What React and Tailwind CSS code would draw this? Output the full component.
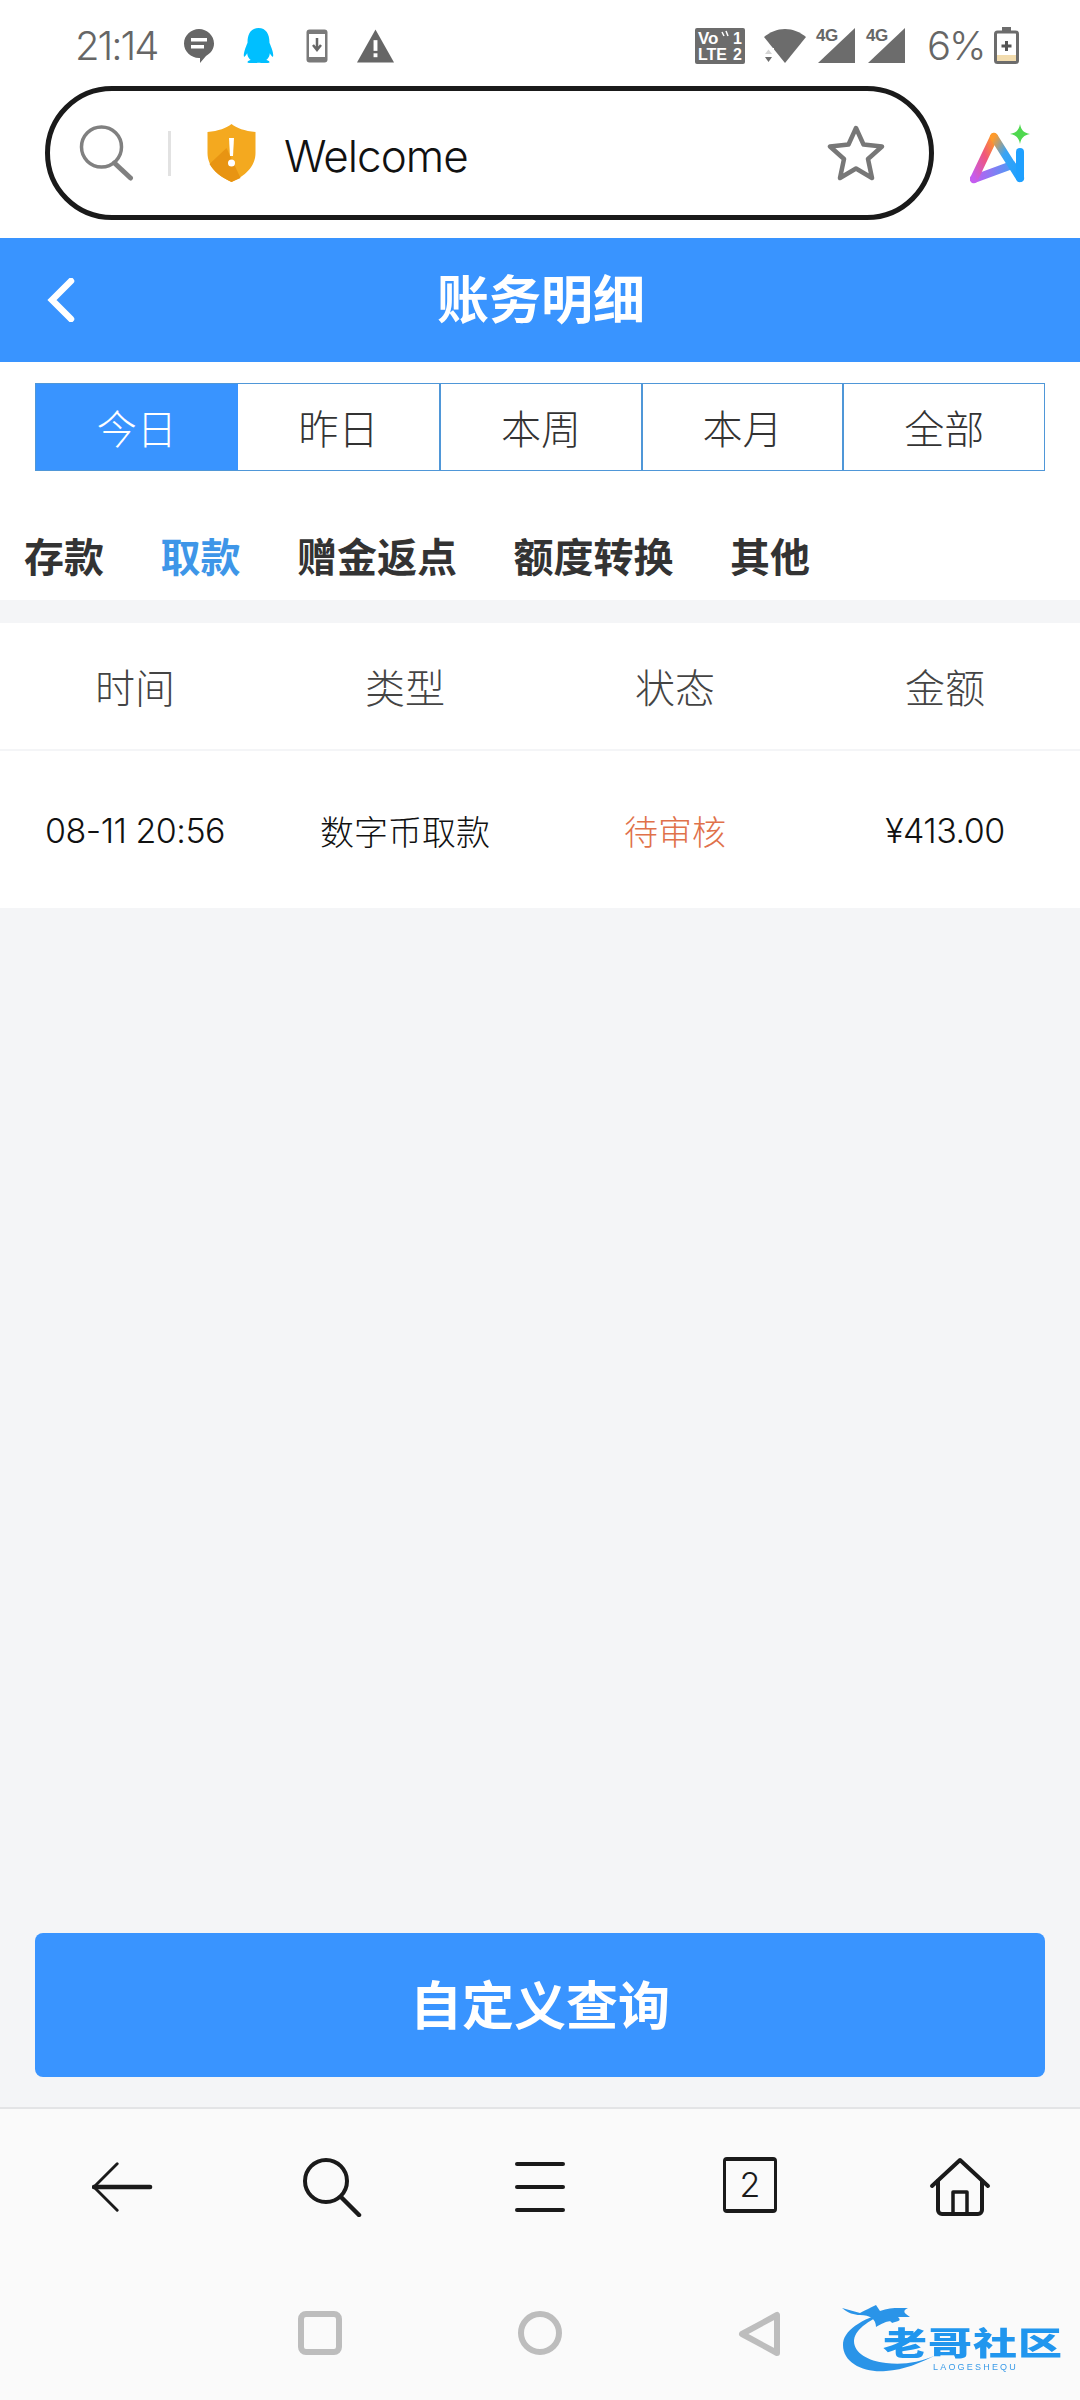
// App.jsx - account details page inside a mobile browser shell
import React from 'react';
import { FaQq } from 'react-icons/fa';

const latin = "font-['Inter','Noto_Sans_CJK_SC',sans-serif]";

const periods = ['今日', '昨日', '本周', '本月', '全部'];
const categories = ['存款', '取款', '赠金返点', '额度转换', '其他'];
const columns = ['时间', '类型', '状态', '金额'];

const StatusBar = () => (
  <div className="h-[86px] flex items-start pt-[27px] pl-[75px] pr-[61px] justify-between bg-white text-[#666666]">
    <div className="flex items-center h-[37px]">
      <span className={`${latin} font-light text-[40px] leading-none tracking-[-2px] w-[109px]`}>21:14</span>
      <svg width="30" height="36" viewBox="0 0 30 36">
        <path fill="#666666" d="M15 1C7 1 0 7.500 0 15.500 0 23.500 7 30 15 30l1 0 0 5 6-7c5-3 8-7 8-12.500C30 7.500 23 1 15 1z" />
        <rect x="7" y="10" width="16" height="3.500" fill="#fff" />
        <rect x="7" y="17" width="13" height="3.500" fill="#fff" />
      </svg>
      <FaQq className="ml-[29px] w-[31px] h-[35px] text-[#00bfff]" />
      <svg width="22" height="34" viewBox="0 0 22 34" className="ml-[32px]">
        <rect x="0.500" y="0.500" width="21" height="33" rx="3" fill="#7a7a7a" />
        <rect x="3" y="5" width="16" height="23" fill="#fff" />
        <path d="M11 9v11M7 16l4 5 4-5" stroke="#666" strokeWidth="2.500" fill="none" />
      </svg>
      <svg width="37" height="34" viewBox="0 0 38 34" className="ml-[29px]">
        <path fill="#666" d="M19 0 38 34H0z" />
        <rect x="17" y="11" width="4" height="11" fill="#fff" />
        <rect x="17" y="24.500" width="4" height="4" fill="#fff" />
      </svg>
    </div>
    <div className="flex items-center h-[37px]">
      <svg width="50" height="36" viewBox="0 0 50 36">
        <rect width="50" height="36" rx="2" fill="#6c6c6c" />
        <text x="3" y="16" fontFamily="Liberation Sans" fontWeight="700" fontSize="17" fill="#fff">Vo</text>
        <text x="38" y="16" fontFamily="Liberation Sans" fontWeight="700" fontSize="16" fill="#fff">1</text>
        <path d="M27 4l2 4M31 3l2 5" stroke="#fff" strokeWidth="1.500" />
        <text x="3" y="32" fontFamily="Liberation Sans" fontWeight="700" fontSize="16" fill="#fff">LTE</text>
        <text x="38" y="32" fontFamily="Liberation Sans" fontWeight="700" fontSize="16" fill="#fff">2</text>
      </svg>
      <svg width="42" height="36" viewBox="0 0 42 36" className="ml-[19px]">
        <path fill="#6c6c6c" d="M0 9C6 4 13 1 21 1s15 3 21 8L21 35z" />
        <path fill="#fff" d="M0 20h10v16H0z" />
        <path fill="#d4d4d4" d="M1 26h7l-3.500-4.500z" />
        <path fill="#6c6c6c" d="M1 29h7l-3.500 5z" />
      </svg>
      {[0, 1].map((i) => (
        <div key={i} className="relative w-[39px] h-[37px] ml-[11px]">
          <svg width="39" height="37" viewBox="0 0 39 37">
            <path fill="#6c6c6c" d="M38 1v35H1z" />
          </svg>
          <span className="absolute left-[-1px] top-[0px] text-[17px] leading-none font-bold tracking-[-0.500px] font-['Liberation_Sans',sans-serif]">4G</span>
        </div>
      ))}
      <span className={`${latin} font-light text-[40px] leading-none tracking-[-2px] ml-[21px] w-[67px]`}>6%</span>
      <svg width="25" height="37" viewBox="0 0 25 37">
        <rect x="8" y="0" width="9" height="4" fill="#6c6c6c" />
        <rect x="1.500" y="5" width="22" height="30.500" rx="2" fill="#fff" stroke="#6c6c6c" strokeWidth="3" />
        <rect x="3" y="28" width="19" height="6" fill="#f2dcae" />
        <path d="M12.500 14v10M7.500 19h10" stroke="#555" strokeWidth="3" />
      </svg>
    </div>
  </div>
);

const UrlBar = () => (
  <div className="h-[152px] flex items-start bg-white pl-[45px]">
    <div className="w-[889px] h-[134px] rounded-[67px] border-[5px] border-[#1a1a1a] flex items-center pl-[29px] pr-[44px]">
      <svg width="55" height="56" viewBox="0 0 54 56" fill="none" stroke="#808080" className="shrink-0">
        <circle cx="22" cy="22" r="20" strokeWidth="3.500" />
        <path d="M35 38l16 15" strokeWidth="5" strokeLinecap="round" />
      </svg>
      <div className="w-[3px] h-[45px] bg-[#e2e2e2] ml-[34px]" />
      <svg width="51" height="58" viewBox="0 0 50 58" className="ml-[35px] shrink-0">
        <path fill="#f4a91f" d="M25 0c5 4 13 7 24 8v21C49 43 38 52 25 58 12 52 1 43 1 29V8C12 7 20 4 25 0z" />
        <path fill="#e89412" d="M3 40 20 24l14 30-9 4C14 53 7 47 3 40z" />
        <path fill="#fff" d="M22.500 14h5l-1 18h-3z" />
        <circle cx="25" cy="39" r="3.500" fill="#fff" />
      </svg>
      <span className={`${latin} font-light text-[44px] leading-none text-[#111111] ml-[27px] pt-[5px] tracking-[-1px]`}>Welcome</span>
      <svg width="58" height="58" viewBox="0 0 58 58" fill="none" className="ml-auto shrink-0">
        <path stroke="#777777" strokeWidth="4.500" strokeLinejoin="round" d="M29 4l7.500 16.500 18.500 2-14 12.500 4 19L29 44.500 13 54l4-19L3 22.500l18.500-2z" />
      </svg>
    </div>
    <svg width="62" height="62" viewBox="0 0 62 62" fill="none" className="ml-[36px] mt-[38px]">
      <defs>
        <linearGradient id="legLeft" x1="0" y1="1" x2="1" y2="0">
          <stop offset="0" stopColor="#c45cf0" />
          <stop offset="0.550" stopColor="#f0557c" />
          <stop offset="1" stopColor="#ffa01e" />
        </linearGradient>
        <linearGradient id="legRight" x1="0" y1="0" x2="1" y2="1">
          <stop offset="0" stopColor="#ff9a2a" />
          <stop offset="0.400" stopColor="#3aa4f4" />
          <stop offset="1" stopColor="#1fa0ff" />
        </linearGradient>
        <linearGradient id="crossBar" x1="0" y1="0" x2="1" y2="0">
          <stop offset="0" stopColor="#c25cf2" />
          <stop offset="1" stopColor="#4a9cf5" />
        </linearGradient>
      </defs>
      <path d="M4 55 42 41" stroke="url(#crossBar)" strokeWidth="8" strokeLinecap="round" />
      <path d="M4 55 24 13" stroke="url(#legLeft)" strokeWidth="8" strokeLinecap="round" />
      <path d="M24 13 50 54" stroke="url(#legRight)" strokeWidth="8" strokeLinecap="round" />
      <path d="M50 28V54" stroke="#1fa0ff" strokeWidth="8" strokeLinecap="round" />
      <path fill="#4fd84f" d="M50 0c1 6 4 9 10 10-6 1-9 4-10 10-1-6-4-9-10-10 6-1 9-4 10-10z" />
    </svg>
  </div>
);

const PageHeader = () => (
  <div className="relative h-[124px] pb-[6px] pl-[2px] bg-[#3994ff] flex items-center justify-center">
    <svg width="28" height="44" viewBox="0 0 28 44" fill="none" className="absolute left-[47px] top-[40px]">
      <path d="M24 3 5 22l19 19" stroke="#fff" strokeWidth="6.500" strokeLinecap="round" />
    </svg>
    <span className="text-[52px] leading-none font-bold text-white font-['Noto_Sans_CJK_SC',sans-serif]">账务明细</span>
  </div>
);

const PeriodTabs = () => (
  <div className="mt-[21px] mx-[35px] h-[88px] flex border border-[#4f97d8]">
    {periods.map((label, i) => (
      <div
        key={label}
        className={`w-[201.6px] flex items-center justify-center text-[40px] font-light ${
          i === 0 ? 'bg-[#3994ff] text-white' : 'text-[#333333]'
        } ${i > 1 ? 'border-l-2 border-[#4f97d8]' : ''}`}
      >
        {label}
      </div>
    ))}
  </div>
);

const CategoryTabs = () => (
  <div className="h-[129px] pl-[24px] pt-[38px] flex items-center gap-[56.5px]">
    {categories.map((label, i) => (
      <span
        key={label}
        className={`text-[40px] leading-none font-bold ${i === 1 ? 'text-[#3e96e8]' : 'text-[#333333]'}`}
      >
        {label}
      </span>
    ))}
  </div>
);

const RecordTable = () => (
  <div className="bg-white">
    <div className="h-[128px] grid grid-cols-4 items-center text-center text-[40px] font-light text-[#444444] border-b-2 border-[#f4f5f7]">
      {columns.map((c) => (
        <span key={c}>{c}</span>
      ))}
    </div>
    <div className="h-[157px] pt-[2px] grid grid-cols-4 items-center text-center text-[34px] font-light text-[#111111]">
      <span className={`${latin} tracking-[-0.500px]`}>08-11 20:56</span>
      <span>数字币取款</span>
      <span className="text-[#e0714a]">待审核</span>
      <span className={`${latin} tracking-[-0.500px]`}>¥413.00</span>
    </div>
  </div>
);

const BrowserBar = () => (
  <div className="h-[160px] grid grid-cols-5 px-[15px] pt-[48px] items-start justify-items-center">
    <svg width="62" height="52" viewBox="0 0 64 52" fill="none" stroke="#1a1a1a" strokeLinecap="round" className="mt-[4px] ml-[6px]">
      <path d="M2 26h58" strokeWidth="4.500" />
      <path d="M26 2 2 26l24 24" strokeWidth="3" strokeLinejoin="round" />
    </svg>
    <svg width="60" height="60" viewBox="0 0 60 60" fill="none" stroke="#1a1a1a" strokeLinecap="round" className="ml-[3px]">
      <circle cx="24" cy="24" r="21" strokeWidth="4" />
      <path d="M39 40l18 18" strokeWidth="4.500" />
    </svg>
    <div className="w-[50px] h-[50px] mt-[5px] flex flex-col justify-between">
      <div className="h-[4px] bg-[#1a1a1a] rounded-full" />
      <div className="h-[4px] bg-[#1a1a1a] rounded-full" />
      <div className="h-[4px] bg-[#1a1a1a] rounded-full" />
    </div>
    <div className={`${latin} font-light w-[54px] h-[56px] border-x-[3px] border-y-[4px] border-[#1a1a1a] rounded-[4px] flex items-center justify-center text-[34px] leading-none text-[#1a1a1a]`}>
      2
    </div>
    <svg width="62" height="60" viewBox="0 0 62 60" fill="none" stroke="#1a1a1a" strokeWidth="4" strokeLinejoin="round" strokeLinecap="round">
      <path d="M3 29 31 3l28 26" />
      <path d="M9 24v29a4 4 0 0 0 4 4h36a4 4 0 0 0 4-4V24" />
      <path d="M24 57V35h14v22" strokeWidth="3.500" />
    </svg>
  </div>
);

const SystemNav = () => (
  <div className="relative flex-1">
    <div className="w-[660px] ml-[210px] grid grid-cols-3 justify-items-center pt-[42px]">
      <div className="w-[44px] h-[44px] rounded-[8px] border-[6px] border-[#bdbdbd]" />
      <div className="w-[44px] h-[44px] rounded-full border-[6px] border-[#bdbdbd]" />
      <svg width="44" height="46" viewBox="0 0 44 46" fill="none">
        <path d="M39 4v38L4 23z" stroke="#bdbdbd" strokeWidth="6" strokeLinejoin="round" />
      </svg>
    </div>
    {/* community watermark in the corner */}
    <div className="absolute left-[840px] top-[36px] w-[230px] h-[70px] blur-[0.6px]">
      <svg width="110" height="70" viewBox="0 0 110 70" className="absolute left-0 top-0" fill="#2a94e8">
        <path d="M50 6C20 14 3 26 3 40c0 18 21 28 43 26 18-1 34-8 50-16-18 8-34 10-50 8-18-2-32-10-32-22 0-10 12-20 36-30z" />
        <path d="M2 3l18 5c8-4 12-6 16-8l4 6c10-4 20-3 28-3-6 3-4 5 2 9H58c4 4 0 4-6 6-2-4-8 0-16 4 0-8-6-12-16-12-6 0-12-2-18-7z" />
      </svg>
      <span className="absolute left-[43px] top-[14px] text-[44px] leading-[44px] font-black tracking-[1px] whitespace-nowrap scale-y-[0.72] text-[#2196ee] font-['Noto_Sans_CJK_SC',sans-serif]">老哥社区</span>
      <span className="absolute left-[93px] top-[58px] text-[9px] leading-[9px] tracking-[2.2px] whitespace-nowrap text-[#3a9be8] font-['Liberation_Sans',sans-serif]">LAOGESHEQU</span>
    </div>
  </div>
);

const App = () => (
  <div className="w-[1080px] h-[2400px] flex flex-col bg-[#f4f5f7] overflow-hidden font-['Noto_Sans_CJK_SC',sans-serif]">
    <StatusBar />
    <UrlBar />
    <PageHeader />
    <div className="bg-white">
      <PeriodTabs />
      <CategoryTabs />
    </div>
    <div className="flex-1 pt-[23px] flex flex-col">
      <RecordTable />
      <div className="mt-auto mx-[35px] mb-[30px] h-[144px] pb-[4px] bg-[#3994ff] rounded-[8px] flex items-center justify-center text-[52px] font-bold text-white">
        自定义查询
      </div>
    </div>
    <div className="h-[293px] bg-[#fafafa] border-t-2 border-[#e3e4e6] flex flex-col">
      <BrowserBar />
      <SystemNav />
    </div>
  </div>
);

export default App;
